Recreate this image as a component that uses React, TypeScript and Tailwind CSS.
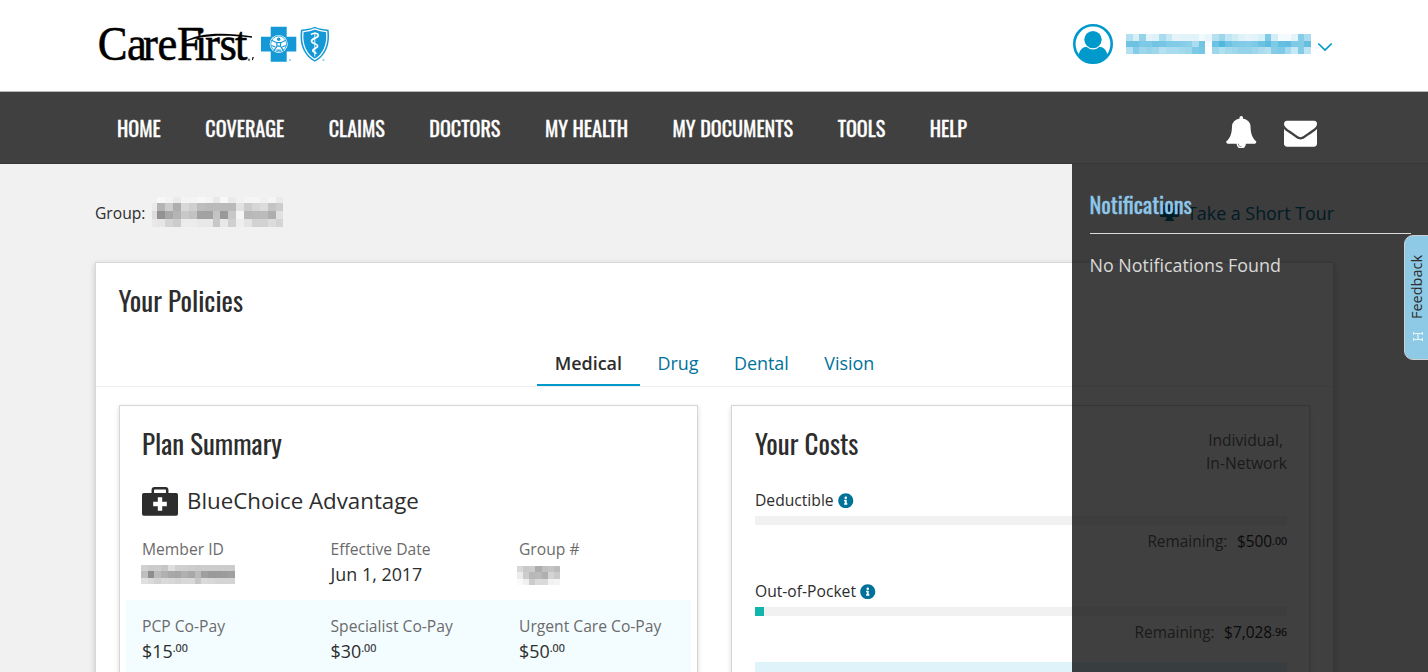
import type { ReactNode } from 'react';
import { FaInfoCircle } from 'react-icons/fa';

const NAV = ['HOME', 'COVERAGE', 'CLAIMS', 'DOCTORS', 'MY HEALTH', 'MY DOCUMENTS', 'TOOLS', 'HELP'];

const USER_CELLS = [
  'b2e0f0 d6eff7 95d3ea e2f4fa dff2f9 a9dcee c6e8f4 e4f4fa e2f4fa e2f4fa e0f3f9 f0f9fc e8f6fb b4e0f0 9ed7ec c0e6f3 cfecf5 dff2f9 e6f5fa e2f4fa d8f0f8 7fcae6 d2edf6 f4fbfd f6fbfd e4f4fa 84cce7 a9dcee',
  '6fc3e2 6fc3e2 7ccae5 7ccae5 72c4e3 74c6e4 80cbe6 80cbe6 84cce7 8ccfe8 a9dcee 72c4e3 f8fcfe 6cc2e2 52b7dd 6fc3e2 7ccae5 80cbe6 84cce7 7ccae5 6cc2e2 5cbbdf 7ccae5 66bfe0 62bde0 7ccae5 80cbe6 66bfe0',
  'b4e0f0 84cce7 9ed7ec 95d3ea 9ed7ec b4e0f0 a9dcee a9dcee a4daed 9ed7ec 7ccae5 76c7e4 ffffff 9ed7ec b0dff0 a4daed 9ed7ec 95d3ea 95d3ea 9ed7ec a9dcee b4e0f0 84cce7 7ccae5 a4daed c6e8f4 80cbe6 bfe5f3',
];
const GROUP_CELLS = [
  'f1f1f1 f8f8f8 f3f3f3 eaeaea f4f4f4 f4f4f4 f8f8f8 f4f4f4 e8e8e8 f8f8f8 ebebeb f1f1f1 f5f5f5 f5f5f5 f0f0f0 f5f5f5 eaeaea',
  'eaeaea b4b4b4 cccccc aeaeae d8d8d8 cfcfcf bdbdbd bababa bbbbbb bababa bababa e2e2e2 cccccc d6d6d6 dcdcdc c4c4c4 cccccc',
  'dddddd 929292 a8a8a8 b4b4b4 c8c8c8 c2c2c2 a2a2a2 a2a2a2 c4c4c4 999999 c8c8c8 f5f5f5 b8b8b8 bababa bbbbbb aeaeae e0e0e0',
  'e8e8e8 e6e6e6 d4d4d4 cccccc ececec ececec e8e8e8 e8e8e8 c8c8c8 e8e8e8 d0d0d0 eeeeee e4e4e4 d2d2d2 d2d2d2 dcdcdc d4d4d4',
];
const MEMBER_CELLS = [
  'd0d0d0 cbcbcb cdcdcd c6c6c6 dedede d0d0d0 cfcfcf cccccc cacaca cccccc cccccc cccccc cccccc cccccc',
  'bfbfbf 8e8e8e bcbcbc b0b0b0 a8a8a8 a6a6a6 b0b0b0 a8a8a8 bababa 9f9f9f 999999 9a9a9a 9c9c9c a0a0a0',
  'e0e0e0 dadada d2d2d2 dadada d8d8d8 d4d4d4 d8d8d8 d8d8d8 c6c6c6 dadada d8d8d8 d4d4d4 d4d4d4 d4d4d4',
];
const GROUP_NO_CELLS = [
  'd8d8d8 c8c8c8 cccccc adadad c0c0c0 c4c4c4 bcbcbc',
  'ececec cccccc b8b8b8 bababa b0b0b0 d4d4d4 cacaca',
  'fafafa f0f0f0 cccccc dadada dadada f2f2f2 f4f4f4',
];

function Mosaic({ rows, className, first = '1fr', top = '1fr' }: { rows: string[]; className: string; first?: string; top?: string }) {
  const count = rows[0].split(' ').length;
  return (
    <div
      className={`grid shrink-0 ${className}`}
      style={{
        gridTemplateColumns: `${first} repeat(${count - 1}, 1fr)`,
        gridTemplateRows: `${top} repeat(${rows.length - 1}, 1fr)`,
      }}
    >
      {rows.flatMap((row, y) =>
        row.split(' ').map((c, x) => <div key={`${y}-${x}`} style={{ backgroundColor: `#${c}` }} />),
      )}
    </div>
  );
}

const LOGO_SCALE = 0.91;
const LOGO_X = [97.8, 127, 143, 157.5, 177, 195, 205, 219.5, 235].map((x) => (x / LOGO_SCALE).toFixed(1)).join(' ');

function Logo() {
  return (
    <svg width="234" height="88" viewBox="96 0 234 88" className="shrink-0">
      <text x={LOGO_X} y="60.300" transform={`scale(${LOGO_SCALE} 1)`} fontSize="49" fontFamily="'Liberation Serif', serif" fill="#000" stroke="#000" strokeWidth="0.600">
        CareFirst
      </text>
      <path d="M184 41.500C197 33.500 221 31.500 252 36.300v1.400C222 34.300 200 35.500 184 42.500z" fill="#000" />
      <circle cx="249" cy="59.700" r="1.200" fill="#777" />
      <path d="M252.300 57.200l1.600-.3-1 3.200-.9.200z" fill="#000" />
      <g fill="#1599d6">
        <path d="M270.700 26.700h16v10h9.600v14.800h-9.600v10.200h-16V51.500h-9.700V36.700h9.700z" />
        <path d="M301 29.700c5-.4 10-1.300 13.800-3 3.800 1.700 8.800 2.600 13.800 3 .8 6 .7 14-2.400 20.300-2.500 5-6 9.300-11.400 11.700-5.400-2.400-8.900-6.700-11.400-11.700-3.100-6.300-3.200-14.300-2.400-20.300z" />
        <circle cx="290" cy="60" r="1.100" opacity=".5" />
        <circle cx="323.500" cy="60" r="1.100" opacity=".5" />
      </g>
      <circle cx="278.700" cy="43.900" r="9" fill="#fff" />
      <g fill="none" stroke="#1599d6" strokeWidth="1.200">
        <circle cx="278.700" cy="43.900" r="7.900" strokeWidth=".8" />
        <path d="M271.500 40.300l5.200 2.400h4l5.200-2.400M276.700 42.700l.3 3.500-3.300 5M280.700 42.700l-.3 3.500 3.300 5M277 46.200h3.400M271.300 45.500l4 1.500M286.100 45.500l-4 1.500M276.500 50.200h4.400" />
      </g>
      <circle cx="278.700" cy="39.300" r="1.700" fill="#1599d6" />
      <path d="M303 31.600c4.400-.4 8.400-1.200 11.800-2.700 3.400 1.500 7.400 2.300 11.800 2.700.6 5.400.2 12-2.300 17.400-2.200 4.400-5.200 8.200-9.500 10.400-4.300-2.200-7.300-6-9.500-10.400-2.500-5.400-2.900-12-2.300-17.400z" fill="none" stroke="#fff" strokeWidth="1.300" />
      <g fill="none" stroke="#fff">
        <path d="M314.800 32.500V56.500" strokeWidth=".9" />
        <path d="M311 34.600c2-2 7-1.800 7.300.8.300 2.700-6.800 2.700-6.800 5.600 0 2.800 6.200 2.600 6.200 5 0 2.500-5 2.400-5 4.500 0 1.500 3.300 1.500 3.300 3.500" strokeWidth="1.700" />
      </g>
    </svg>
  );
}

function UserIcon() {
  return (
    <svg width="40" height="40" viewBox="0 0 40 40">
      <circle cx="20" cy="20" r="18.700" fill="#fff" stroke="#0099cc" strokeWidth="2.600" />
      <path d="M5.500 31.500c1-5.500 4-8.700 9-8.700 3.500 3 7.500 3 11 0 5 0 8 3.200 9 8.700a18.500 18.500 0 0 1-29 0z" fill="#0099cc" />
      <circle cx="20" cy="15.600" r="9.800" fill="#fff" />
      <circle cx="20" cy="15.600" r="8.700" fill="#0099cc" />
    </svg>
  );
}

function BellIcon() {
  return (
    <svg width="32.500" height="32.500" viewBox="0 0 1792 1792" fill="#fff">
      <path d="M912 1696q0-16-16-16-59 0-101.500-42.500t-42.500-101.500q0-16-16-16t-16 16q0 73 51.500 124.500t124.500 51.500q16 0 16-16zm816-288q0 52-38 90t-90 38h-448q0 106-75 181t-181 75-181-75-75-181h-448q-52 0-90-38t-38-90q50-42 91-88t85-119.500 74.500-158.500 50-206 19.500-260q0-152 117-282.500t307-158.500q-8-19-8-39 0-40 28-68t68-28 68 28 28 68q0 20-8 39 190 28 307 158.500t117 282.500q0 139 19.500 260t50 206 74.500 158.500 85 119.500 91 88z" />
    </svg>
  );
}

function EnvelopeIcon() {
  return (
    <svg width="33" height="33" viewBox="0 0 1792 1792" fill="#fff">
      <path d="M1792 710v794q0 66-47 113t-113 47h-1472q-66 0-113-47t-47-113v-794q44 49 101 87 362 246 497 345 57 42 92.500 65.500t94.500 48 110 24.500h2q51 0 110-24.500t94.500-48 92.500-65.500q170-123 498-345 57-39 100-87zm0-294q0 79-49 151t-122 123q-376 261-468 325-10 7-42.500 31t-54 38.500-52 32.500-57.500 27-50 9h-2q-23 0-50-9t-57.500-27-52-32.500-54-38.500-42.500-31q-91-64-262-182.500t-205-142.500q-62-42-117-115.500t-55-136.500q0-78 41.500-130t118.500-52h1472q65 0 112.500 47t47.500 113z" />
    </svg>
  );
}

function MedkitIcon() {
  return (
    <svg width="36" height="29" viewBox="0 0 36 29" className="mt-[2px]">
      <path d="M10.800 6.500V3q0-1.700 1.700-1.700h11q1.700 0 1.700 1.700v3.500" fill="none" stroke="#2d2d2d" strokeWidth="2.500" />
      <rect y="6" width="36" height="22.700" rx="1.800" fill="#2d2d2d" />
      <path d="M18 10.200v13.600M11.200 17h13.600" stroke="#fff" strokeWidth="4.400" />
    </svg>
  );
}

function Heading({ children }: { children: ReactNode }) {
  return <h2 className="font-['Oswald','Open_Sans',sans-serif] text-[27px] leading-[39px] font-normal whitespace-nowrap">{children}</h2>;
}

function Field({ label, children }: { label: string; children: ReactNode }) {
  return (
    <div className="w-[188.500px] shrink-0 whitespace-nowrap">
      <div className="h-[25px] text-[15.650px] leading-[25px] text-[#6b6b6b]">{label}</div>
      <div className="flex h-[25px] text-[17.900px] leading-[24px]">{children}</div>
    </div>
  );
}

function Money({ whole, cents }: { whole: string; cents: string }) {
  return (
    <>
      {whole}
      <span className="-mt-[3px] text-[10.700px] [-webkit-text-stroke:0.2px]">.{cents}</span>
    </>
  );
}

function Cost({ label, whole, cents, fill }: { label: string; whole: string; cents: string; fill: number }) {
  return (
    <div className="h-[91px]">
      <div className="flex h-[32px] items-center gap-[4.500px] pt-[1px] text-[15.650px]">
        {label}
        <FaInfoCircle className="size-[15.500px] text-[#00729a]" />
      </div>
      <div className="h-[9px] bg-[#f1f1f1]">
        <div className="h-full bg-[#12b5ae]" style={{ width: fill }} />
      </div>
      <div className="flex h-[34px] items-center justify-end text-[15.400px] leading-[24px] text-[#2d2d2d]">
        <span className="mr-[9.500px] text-[#6b6b6b]">Remaining:</span>
        <span>{whole}</span>
        <span className="-mt-[3px] text-[10.600px] [-webkit-text-stroke:0.2px]">.{cents}</span>
      </div>
    </div>
  );
}

export default function App() {
  return (
    <div className="relative h-[672px] w-[1428px] overflow-hidden bg-[#f1f1f1] font-['Open_Sans','Noto_Sans',sans-serif] text-[#2d2d2d]">
      <header className="flex h-[92px] justify-between border-b border-[#b3b8ba] bg-white pr-[95px] pl-[96px]">
        <Logo />
        <div className="flex h-[88px] items-center">
          <UserIcon />
          <Mosaic rows={USER_CELLS} className="ml-[13px] h-[20px] w-[185px]" />
          <svg width="16" height="10" viewBox="0 0 16 10" className="mt-[5px] ml-[6px]">
            <path d="M1.300 1.500l6.700 6.500 6.700-6.500" fill="none" stroke="#0099cc" strokeWidth="1.700" />
          </svg>
        </div>
      </header>

      <nav className="flex h-[72px] items-center justify-between border-b border-[#383838] bg-[#404040] pr-[111.500px] pl-[117px]">
        <div className="flex gap-[44.500px] font-['Oswald','Open_Sans',sans-serif] text-[20.200px] leading-[30px] font-normal whitespace-nowrap text-white [-webkit-text-stroke:0.350px]">
          {NAV.map((n) => <a key={n}>{n}</a>)}
        </div>
        <div className="flex items-center gap-[26.500px] pt-[9px]">
          <BellIcon />
          <EnvelopeIcon />
        </div>
      </nav>

      <main className="pr-[94px] pl-[95px]">
        <div className="flex h-[98px] items-center justify-between">
          <div className="flex items-center pb-[2px] text-[15.650px]">
            <span className="pt-[3px]">Group:</span>
            <Mosaic rows={GROUP_CELLS} first="5px" top="6px" className="ml-[7px] h-[30px] w-[131px]" />
          </div>
          <a className="flex items-center gap-[8px] text-[17.860px] text-[#006f94]">
            <svg width="19" height="16" viewBox="0 0 19 16" fill="currentColor">
              <path d="M1.500 0h16q1.500 0 1.500 1.500v9q0 1.500-1.500 1.500h-5v2.500h1.500v1.500h-9v-1.500h1.500v-2.500h-5q-1.500 0-1.500-1.500v-9q0-1.500 1.500-1.500z" />
            </svg>
            Take a Short Tour
          </a>
        </div>

        <section className="h-[500px] border border-[#d8d8d8] bg-white shadow-[0_2px_6px_rgba(0,0,0,0.18)]">
          <div className="h-[58px] pt-[18px] pl-[22.500px]"><Heading>Your Policies</Heading></div>
          <div className="mt-[20px] flex h-[46px] justify-center border-b border-[#efefef] text-[17.950px] leading-[44px] text-[#00729a]">
            <span className="-mb-px h-[45px] border-b-[2.500px] border-[#0099cc] px-[17.700px] font-semibold text-[#2d2d2d]">Medical</span>
            <span className="px-[17.700px]">Drug</span>
            <span className="px-[17.700px]">Dental</span>
            <span className="px-[17.700px]">Vision</span>
          </div>

          <div className="flex justify-between px-[23px] pt-[17.500px]">
            <article className="h-[400px] w-[579px] border border-[#d6d6d6] bg-white shadow-[0_2px_5px_rgba(0,0,0,0.15)]">
              <div className="h-[58px] pt-[18px] pl-[22px]"><Heading>Plan Summary</Heading></div>
              <div className="mt-[18px] flex h-[38px] items-center gap-[9px] pl-[22px] text-[22.300px]">
                <MedkitIcon />
                BlueChoice Advantage
              </div>
              <div className="mt-[17px] flex h-[63.500px] pl-[22px]">
                <Field label="Member ID"><Mosaic rows={MEMBER_CELLS} className="mt-[3.500px] -ml-[1px] h-[19px] w-[94px]" /></Field>
                <Field label="Effective Date">Jun 1, 2017</Field>
                <Field label="Group #"><Mosaic rows={GROUP_NO_CELLS} className="mt-[4.500px] -ml-[2px] h-[19px] w-[43px]" /></Field>
              </div>
              <div className="mx-[6px] flex h-[120px] bg-[#f3fcff] pt-[14px] pl-[16px]">
                <Field label="PCP Co-Pay"><Money whole="$15" cents="00" /></Field>
                <Field label="Specialist Co-Pay"><Money whole="$30" cents="00" /></Field>
                <Field label="Urgent Care Co-Pay"><Money whole="$50" cents="00" /></Field>
              </div>
            </article>

            <article className="h-[400px] w-[579px] border border-[#d6d6d6] bg-white pr-[22px] pl-[23px] shadow-[0_2px_5px_rgba(0,0,0,0.15)]">
              <div className="flex h-[78.500px] justify-between pt-[18px]">
                <Heading>Your Costs</Heading>
                <div className="pt-[5px] text-right text-[15.600px] leading-[23.500px] text-[#6b6b6b]">
                  <div className="pr-[4px]">Individual,</div>
                  <div>In-Network</div>
                </div>
              </div>
              <Cost label="Deductible" whole="$500" cents="00" fill={0} />
              <Cost label="Out-of-Pocket" whole="$7,028" cents="96" fill={9} />
              <div className="-mt-[4px] h-[100px] bg-[#dff3fb]" />
            </article>
          </div>
        </section>
      </main>

      <aside className="absolute top-[164px] right-0 h-[508px] w-[356px] bg-black/75 pt-[22px] pr-[17px] pl-[17.500px]">
        <h3 className="h-[48px] border-b border-[#dcdcdc] font-['Oswald','Open_Sans',sans-serif] text-[22.400px] leading-[35px] font-normal text-[#8ec7ea] [-webkit-text-stroke:0.350px]">Notifications</h3>
        <p className="mt-[18px] text-[17.860px] leading-[26px] text-[#d9d9d9]">No Notifications Found</p>
      </aside>

      <button className="absolute top-[235px] -right-[2px] flex h-[125px] w-[26px] rotate-180 items-center gap-[13px] rounded-r-[9px] border border-[#cfcfcf] bg-[#8ecae6] pt-[18px] text-[14.470px] leading-[24px] [writing-mode:vertical-rl]">
        <svg width="10" height="9" viewBox="0 0 10 9" fill="none" stroke="#e3f3fa" strokeWidth="1.200" className="mr-[2px] shrink-0">
          <path d="M.6 3V0M.6 9V6M9.400 3V0M9.400 9V6M.6 1.500h8.800M.6 7.500h8.800M5 1.500v6" />
        </svg>
        <span>Feedback</span>
      </button>
    </div>
  );
}
